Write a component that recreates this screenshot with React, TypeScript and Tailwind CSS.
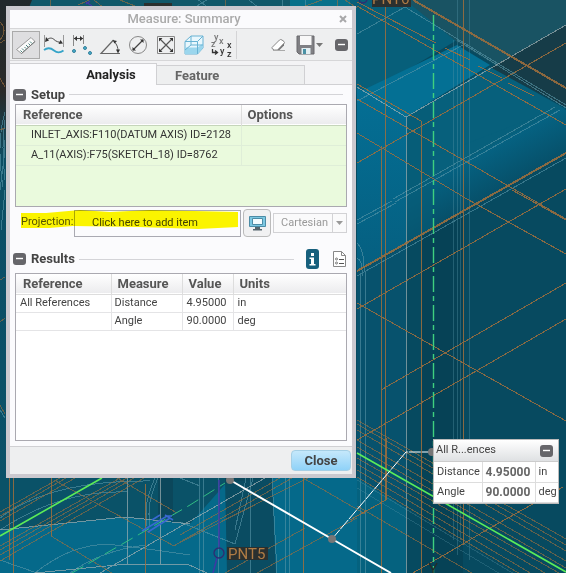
import React from 'react';

const REFERENCES = ['INLET_AXIS:F110(DATUM AXIS) ID=2128', 'A_11(AXIS):F75(SKETCH_18) ID=8762'];

const RESULTS = [
  { reference: 'All References', measure: 'Distance', value: '4.95000', units: 'in' },
  { reference: '', measure: 'Angle', value: '90.0000', units: 'deg' },
];

const MinusIcon: React.FC = () => (
  <svg width="13" height="12" viewBox="0 0 13 12" aria-hidden="true">
    <rect width="13" height="12" rx="3" fill="#66666a" />
    <path d="M3 5.5h7" stroke="#fff" strokeWidth="1.4" />
  </svg>
);

const RulerIcon: React.FC = () => (
  <svg width="22" height="22" viewBox="0 0 22 22" fill="none">
    <path d="M1.500 15.500 16 3.500l4 4L6.500 19.500z" fill="#fbfbfb" stroke="#999" />
    <path d="M6.500 19.500 20 7.500" stroke="#777" />
    <path d="m7 18-1.500-1.500M9 16.500l-2-2M11 14.500 9.500 13M13 13l-2-2M15 11l-1.500-1.500M17 9.500l-2-2" stroke="#4a8580" />
  </svg>
);

const LengthIcon: React.FC = () => (
  <svg width="22" height="22" viewBox="0 0 22 22" fill="none">
    <path d="M1.500 1v12M20.500 1v12" stroke="#999" />
    <path d="M3 6.500c3-3 6-3 8-1s5 3 8 3" stroke="#444" />
    <path d="m2 8 1-5 3 3.500zM20 9.500l-4.500.5 2-4z" fill="#333" />
    <path d="M1 16c4-3 7-2 10 .5s6 2.500 9.500 0" stroke="#35a4c8" strokeWidth="1.800" />
  </svg>
);

const DistanceIcon: React.FC = () => (
  <svg width="22" height="22" viewBox="0 0 22 22" fill="none">
    <path d="M2.500 1v11M12.500 1v9" stroke="#888" />
    <path d="M3 4.500h9" stroke="#444" />
    <path d="m3 4.500 3-2.500v5zM12 4.500l-3-2.500v5z" fill="#333" />
    <g fill="#46b1d2" stroke="#37809a">
      <circle cx="3" cy="17" r="1.500" /><circle cx="14" cy="14" r="1.500" /><circle cx="19" cy="19" r="1.500" />
    </g>
  </svg>
);

const AngleIcon: React.FC = () => (
  <svg width="22" height="22" viewBox="0 0 22 22" fill="none">
    <path d="M14.500 6 2 19.500h19" stroke="#666" strokeWidth="1.200" />
    <path d="M15.500 8c2.500 2.500 3.500 5.500 3.500 9" stroke="#555" />
    <path d="m13.500 6 4.500 1-2.500 2.500zM19 19.500l-2-4h4z" fill="#333" />
  </svg>
);

const DiameterIcon: React.FC = () => (
  <svg width="22" height="22" viewBox="0 0 22 22" fill="none">
    <circle cx="11" cy="11" r="8.500" stroke="#888" />
    <path d="m6 16 10-10" stroke="#444" strokeWidth="1.200" />
    <path d="M5.500 16.500V13L9 16.500zM16.500 5.500V9L13 5.500z" fill="#333" />
  </svg>
);

const AreaIcon: React.FC = () => (
  <svg width="22" height="22" viewBox="0 0 22 22" fill="none">
    <path d="M2.500 2.500h17v17h-17z" stroke="#888" />
    <path d="m5 5 12 12M17 5 5 17" stroke="#555" strokeWidth="1.200" />
    <path d="M4 4h3.500L4 7.500zM18 4h-3.500L18 7.500zM4 18h3.500L4 14.500zM18 18h-3.500l3.500-3.500z" fill="#333" />
  </svg>
);

const VolumeIcon: React.FC = () => (
  <svg width="22" height="22" viewBox="0 0 22 22" fill="none">
    <path d="M2 7.500 8 2h12v12l-5.500 6H2z" fill="#e8f7fd" stroke="#68b2d3" />
    <path d="M2 13.500h12.500l5.500-4V14l-5.500 6H2z" fill="#9bd6ed" />
    <path d="M2 7.500h12.500V20M14.500 7.500 20 2M8 2v9h12M8 11l-6 5" stroke="#68b2d3" />
  </svg>
);

const TransformIcon: React.FC = () => (
  <svg width="26" height="26" viewBox="0 0 26 26" fontFamily="Roboto, sans-serif" fontSize="9" fontWeight="500" fill="#777">
    <text x="5" y="8">y</text>
    <text x="2" y="15">z</text>
    <text x="10" y="12">x</text>
    <text x="18" y="16" fill="#333">x</text>
    <text x="11" y="22" fill="#333">y</text>
    <text x="18" y="25" fill="#333">z</text>
    <path d="M3.500 17v3.500h4M6 18.500l2.500 2-2.500 2" fill="none" stroke="#333" strokeWidth="1.300" />
  </svg>
);

const EraserIcon: React.FC = () => (
  <svg width="18" height="16" viewBox="0 0 18 16" fill="none">
    <path d="M2 10.500 9.500 3q1-1 2.500 0l2 1.500q1 1 0 2L7.500 13H4.500L2 11.500z" fill="#fff" stroke="#888" />
    <path d="m7.500 13 6.500-7V8.500l-5 5z" fill="#777" />
    <path d="M3 13.500h12" stroke="#aaa" />
  </svg>
);

const SaveIcon: React.FC = () => (
  <svg width="27" height="20" viewBox="0 0 27 20">
    <path d="M1 1h17v18H3l-2-2z" fill="#808084" stroke="#69696d" />
    <path d="M4 1h11.500v9H4z" fill="#f8f8f8" />
    <path d="M5.500 13h9v6h-9z" fill="#e3eff2" />
    <path d="M7 14h3v5H7z" fill="#4a91a5" />
    <path d="M20 8h7l-3.500 4z" fill="#777" />
  </svg>
);

const MonitorIcon: React.FC = () => (
  <svg className="shrink-0" width="17" height="16" viewBox="0 0 17 16">
    <path d="M.5 1.500h16v10H.5z" fill="#7cc8e2" stroke="#4d8ca6" />
    <path d="M3.500 3.500h10v6h-10z" fill="#f4fcff" stroke="#4d8ca6" />
    <path d="M6 12h5v2h2v1.500H4V14h2z" fill="#56666e" />
  </svg>
);

const InfoIcon: React.FC = () => (
  <svg width="13" height="20" viewBox="0 0 13 20">
    <rect width="13" height="20" rx="3" fill="#17607d" />
    <path d="M5 4h3v3H5zM3.500 8.500H8V15h1.500v1.500h-6V15H5v-5H3.500z" fill="#fff" />
  </svg>
);

const ReportIcon: React.FC = () => (
  <svg width="13" height="16" viewBox="0 0 13 16" fill="none">
    <path d="M.5.500h8l4 4v11H.5z" fill="#fff" stroke="#888" />
    <path d="M8.500.500v4h4" stroke="#888" />
    <circle cx="3.500" cy="8" r="1" stroke="#777" /><circle cx="3.500" cy="12" r="1" stroke="#777" />
    <path d="M6 8.500h5M6 12.500h5" stroke="#555" />
  </svg>
);

const TOOLS = [
  { label: 'Summary', icon: <RulerIcon /> },
  { label: 'Length', icon: <LengthIcon /> },
  { label: 'Distance', icon: <DistanceIcon /> },
  { label: 'Angle', icon: <AngleIcon /> },
  { label: 'Diameter', icon: <DiameterIcon /> },
  { label: 'Area', icon: <AreaIcon /> },
  { label: 'Volume', icon: <VolumeIcon /> },
  { label: 'Transform', icon: <TransformIcon /> },
];

// Wireframe of the part behind the dialog
const ModelScene: React.FC = () => (
  <svg className="absolute inset-0 h-full w-full" viewBox="0 0 566 573" preserveAspectRatio="xMinYMin slice" fill="none">
    <defs>
      <linearGradient id="band" gradientUnits="userSpaceOnUse" x1="420" y1="170" x2="455" y2="235">
        <stop offset="0" stopColor="#05688a" />
        <stop offset="1" stopColor="#07485f" />
      </linearGradient>
      <linearGradient id="left" x1="0" y1="0" x2="0" y2="1">
        <stop offset="0" stopColor="#22292c" />
        <stop offset=".16" stopColor="#2a2a28" />
        <stop offset=".28" stopColor="#0c4e64" />
        <stop offset="1" stopColor="#0a526a" />
      </linearGradient>
      <linearGradient id="column" x1="0" y1="0" x2="0" y2="1">
        <stop offset="0" stopColor="#046f95" />
        <stop offset="1" stopColor="#055f80" />
      </linearGradient>
    </defs>
    <rect width="566" height="573" fill="#074a60" />
    <rect width="60" height="573" fill="url(#left)" />
    <path d="M32 0h390v10H28z" fill="#11586a" />
    <path d="M290 0h70v10h-70z" fill="#08708a" />

    <path d="M350 0h63l44 40-100 60z" fill="#075f7a" />
    <path d="M405 0h161v108L457 42z" fill="#195363" />
    <path d="m490 68 76-43v82z" fill="#163c48" />
    <path d="m357 93 100-48 33 20-84 52z" fill="#047094" />
    <path d="m406 117 84-50 76 42-160 86z" fill="#07607c" />
    <path d="m406 194 155-87-155 60z" fill="#07607c" />
    <path d="m357 220 204-112 5 2v44L357 272z" fill="url(#band)" />
    <path d="M357 88 406 117v127l-49 27z" fill="url(#column)" />
    <path d="M406 117l26-14v127l-26 14z" fill="#075b76" opacity=".6" />
    <path d="m357 272 49-27v328h-49z" fill="#07526d" />
    <path d="m406 245 15-8v336h-15z" fill="#064a60" />
    <path d="m421 237 42-25v361h-42z" fill="#064256" />

    <path d="M0 478h357v95H0z" fill="#0a5268" />
    <path d="m0 530 125-13 65 7 37-42 48-4h85v95H0z" fill="#05698a" />
    <path d="M158 478h15v40h-15zM225 478h47l4 95h-49z" fill="#0b4558" opacity=".8" />
    <path d="m357 478 49 30v65h-49z" fill="#05627f" />

    <g stroke="#5996a8" opacity=".6" shapeRendering="crispEdges">
      <path d="m357 34 48-27 161 98M457 40l109 68M357 101 463 45M393 199l162-92M395 202l165-92M357 220l35-19M357 224l39-21" />
      <path d="m357 276 209-118M357 243q8 8 7 30M357 258q6 3 5 18M360 275v298M365 272v301" />
      <path d="M0 518q50-38 150-37M0 530q60-40 127-38M35 573q40-32 80-28 35 4 75 10M70 573q30-22 75-28" />
      <path d="M199 478v95M203 478v95M218 478v95M250 478v95M272 478l5 95M285 478v95M289 478v95" />
      <path d="M155 478q-12 25-8 48M158 478q-12 25-8 48M180 478l20 8M0 560l37 13M180 522l55 22 18-66M235 530l11-52" />
      <path d="M0 190 5 150 3 130M5 112q-9 30-2 75M5 120q-4 25 0 60M1 230 5 190M0 410l5 8M170 0l26-2 10 8M190 10l17-10M282 0v8M305 0v8M249 0l10 8" />
      <path d="M457 0v555M453 40v500M460 50v490M469 0v560" opacity=".6" />
      <path d="m357 480 209 125M357 488l150 90" opacity=".5" />
    </g>
    <path
      d="m357 87 49 30L566 25M406 117v456M0 530l125-13 65 7M100 573l90-52 75-43M127 478v86M160 478v86M35 573l92-9h60l20 9"
      stroke="#9fafb2"
      opacity=".7"
      shapeRendering="crispEdges"
    />

    <g stroke="#a06f3d" opacity=".85" shapeRendering="crispEdges">
      <path d="M385 0v500M381 146v427M421 121v452M463 0v545M9 478v82M13 478v95M51 478v58M145 484v89M303 478v95" />
      <path d="m413 0 153 88" strokeWidth="2" />
      <path d="m357 271 209-118" strokeWidth="2" />
      <path d="m357 6 209 119M357 84l64 37M357 99l209 120M357 133l110 66 99 55M357 303l209 118M512 190l54 30" />
      <path d="m357 163 209-120M357 309l209-120M381 390l185-107M445 389l121-70M357 440l88-51" />
      <path d="m357 2 79 41M445 48l25 12M478 66l24 12M508 83l26 13" />
      <path d="m406 577 57-33 20-12 80-45M350 520l36-20v-62M357 573l30 18" />
    </g>
    <g stroke="#a06f3d" opacity=".6" shapeRendering="crispEdges">
      <path d="M357 420l209 119M357 424l209 121M357 430l209 121M357 440l209 121M357 447l209 121M357 458l209 119M357 464l195 113M357 470l180 107M357 477l165 98M357 506l120 70" />
      <path d="m0 512 60-34M0 516l66-38M0 521l75-43M0 546l120-68M0 550l127-72M0 555l134-77M0 561l144-83M51 536l61 37M54 480l120 66 34-20M117 478l60 35M173 546l135-68M180 535l100-57M180 542l112-64M257 573l100-55M303 478l62 36M225 573l80-45" />
      <path d="M0 22q8 8 0 18M0 43l5-3M0 78l5 9M0 130l5-2M0 280l5-3M0 322l5-4M0 405l5 9M50 0v7M78 5l18-8M94 0l10 8M120 0l20 8M225 0v8M337 0v8M345 0l12 8M300 8l22-8" />
    </g>

    <path d="M0 536 102 478M357 453l209 119" stroke="#5cec58" strokeWidth="1.600" />
    <path d="M433.500 15v558" stroke="#3fd07f" strokeWidth="1.400" strokeDasharray="16 4 5 4" />
    <path d="m72 573 118-68 35-22" stroke="#31bd83" strokeDasharray="13 6" />
    <path d="m142 531 25-15h5M148 532l22-14M152 520l8-5M165 515l8 5" stroke="#3969d2" strokeWidth="1.500" />
    <path d="M219 480v67M217 558l-4 15M86 4l4-3M86 2l6 4" stroke="#4038a5" strokeWidth="1.500" />
    <circle cx="219" cy="553" r="5" stroke="#302b72" strokeWidth="1.300" />
    <circle cx="363" cy="-1" r="4" stroke="#302b72" strokeWidth="1.300" />
    <path d="M227 547h41v13h-41zM372 0h39v7h-39zM144 3h28v4h-28z" fill="#2b302f" />
    <g fontFamily="Roboto, sans-serif" fontSize="15" fill="#b07c45">
      <text x="228" y="559">PNT5</text>
      <text x="372" y="4">PNT6</text>
    </g>
    <path d="m230 480 102 59 59 34" stroke="#fff" strokeWidth="2" />
    <path d="m332 539 74-87h27" stroke="#fff" strokeDasharray="12 1" />
    <g fill="#777">
      <circle cx="230" cy="480" r="4" /><circle cx="332" cy="539" r="4" /><circle cx="432" cy="452" r="4" />
    </g>
    <path d="m429 563 4 7 4-7M433 570v3" stroke="#242d2a" strokeWidth="1.500" />
  </svg>
);

const SectionTitle: React.FC<{ title: string; children?: React.ReactNode }> = ({ title, children }) => (
  <div className="flex items-center pl-[3px]">
    <button aria-label={`Collapse ${title}`}><MinusIcon /></button>
    <h2 className="ml-[5px] text-[13px] font-bold leading-4 text-[#444]">{title}</h2>
    <div className="mx-1 h-px flex-1 bg-[#d4d4d8]" />
    {children}
  </div>
);

const MeasureDialog: React.FC = () => (
  <section className="relative w-[350px] border-4 border-[#cbc9cf] bg-[#fbfbfd] text-[11px] text-[#444]">
    <header className="flex h-[19px] items-center border-b border-[#d6d6d8] px-1">
      <h1 className="flex-1 pl-4 text-center text-[13px] font-medium leading-4 text-[#aaa]">Measure: Summary</h1>
      <button aria-label="Close window">
        <svg width="10" height="8" viewBox="0 0 10 8"><path d="m2 1 6 6M8 1 2 7" stroke="#a8a8aa" strokeWidth="2" /></svg>
      </button>
    </header>

    <div className="flex h-8 items-center border-b border-[#d6d6d8] bg-[#eeeff0] pl-[2px] pr-1">
      {TOOLS.map((tool, index) => (
        <button
          key={tool.label}
          aria-label={tool.label}
          className={index === 0 ? 'flex h-7 w-7 items-center justify-center border border-[#aaa] bg-[#dedee0]' : 'flex h-7 w-7 items-center justify-center'}
        >
          {tool.icon}
        </button>
      ))}
      <div className="h-7 w-px bg-[#d4d4d6]" />
      <div className="flex flex-1 items-center justify-end">
        <button aria-label="Clear" className="mr-2"><EraserIcon /></button>
        <button aria-label="Save" className="mr-3"><SaveIcon /></button>
        <button aria-label="Collapse toolbar"><MinusIcon /></button>
      </div>
    </div>

    <div className="flex h-6 items-end bg-[#f3f3f5] text-[13px] font-bold leading-5">
      <button className="h-[22px] w-[147px] border-r border-t border-[#d0d0d3] bg-[#fbfbfd] pl-14 text-center text-[#222]">Analysis</button>
      <button className="h-5 w-[148px] border-b border-r border-t border-[#d0d0d3] bg-[#eeeff0] pl-[18px] text-left text-[#666]">Feature</button>
      <div className="h-full flex-1 border-b border-[#d0d0d3]" />
    </div>

    <div className="px-[5px] pb-[5px]">
      <div className="-ml-[5px] flex h-[19px] items-center [&>div]:w-full"><SectionTitle title="Setup" /></div>
      <div className="h-[103px] border border-[#aaa9b0] bg-[#eafadd]">
        <table className="w-full table-fixed border-collapse text-left">
          <thead>
            <tr className="h-5 border-b border-[#c5d5ba] bg-linear-to-b from-white to-[#ececee] text-[13px] leading-4 text-[#555]">
              <th className="w-[225px] border-r border-[#ddd] pl-[7px]">Reference</th>
              <th className="pl-[6px]">Options</th>
            </tr>
          </thead>
          <tbody>
            {REFERENCES.map((reference) => (
              <tr key={reference} className="h-5 border-b border-[#dfeed8] leading-4 text-[#333]">
                <td className="whitespace-nowrap border-r border-[#dfeed8] pl-[15px]">{reference}</td>
                <td />
              </tr>
            ))}
          </tbody>
        </table>
      </div>

      <div className="relative mt-[2px] flex h-7 items-center">
        {/* marker stroke over the label and the field */}
        <svg className="pointer-events-none absolute left-[5px] top-0 z-10 h-5 w-[220px] mix-blend-multiply" viewBox="0 0 220 20" preserveAspectRatio="none">
          <path d="M1 4 26 4 60 1 90 3 130 1 218 3v15l-40 2-60-2-65-1-24 2H1z" fill="#fff800" />
        </svg>
        <label htmlFor="projection" className="w-[59px] pb-px pl-[6px] text-[#555]">Projection:</label>
        <input id="projection" className="h-[27px] min-w-0 flex-1 border border-[#aaaab2] bg-[#fbfbfd] pb-px pl-[17px] text-[#444]" defaultValue="Click here to add item" />
        <button aria-label="Use view plane" className="ml-[2px] flex h-7 w-7 items-center justify-center rounded border border-[#bbb] bg-[#f1f1f2]"><MonitorIcon /></button>
        <div className="relative ml-[2px]">
          <select aria-label="Coordinate type" className="block h-5 w-[74px] appearance-none border border-[#d2d2d5] bg-[#fafafb] pl-[7px] text-[#999]">
            <option>Cartesian</option>
          </select>
          <svg className="pointer-events-none absolute right-0 top-0" width="15" height="20" viewBox="0 0 15 20">
            <path d="M.5 1v18" stroke="#d2d2d5" /><path d="M4 8h7l-3.500 4z" fill="#999" />
          </svg>
        </div>
      </div>

      <div className="-ml-[5px] mt-2 flex h-7 items-center [&>div]:w-full">
        <SectionTitle title="Results">
          <button aria-label="Information" className="ml-2 mr-[14px]"><InfoIcon /></button>
          <button aria-label="Report" className="mr-px"><ReportIcon /></button>
        </SectionTitle>
      </div>
      <div className="h-[168px] border border-[#aaa9b0] bg-white">
        <table className="w-full table-fixed border-collapse text-left">
          <thead>
            <tr className="h-5 border-b border-[#ddd] bg-linear-to-b from-white to-[#ececee] text-[13px] leading-4 text-[#555]">
              <th className="w-[95px] border-r border-[#ddd] pl-[7px]">Reference</th>
              <th className="w-[71px] border-r border-[#ddd] pl-[6px]">Measure</th>
              <th className="w-[51px] border-r border-[#ddd] pl-[6px]">Value</th>
              <th className="pl-[6px]">Units</th>
            </tr>
          </thead>
          <tbody>
            {RESULTS.map((row) => (
              <tr key={row.measure} className="h-[18px] border-b border-[#e4e4e6] leading-4">
                <td className="border-r border-[#e4e4e6] pl-1">{row.reference}</td>
                <td className="border-r border-[#e4e4e6] pl-[3px]">{row.measure}</td>
                <td className="border-r border-[#e4e4e6] pl-1">{row.value}</td>
                <td className="pl-1">{row.units}</td>
              </tr>
            ))}
          </tbody>
        </table>
      </div>
    </div>

    <footer className="flex h-7 items-center justify-end border-t border-[#d0d0d3] bg-[#eeeff0] pr-px">
      <button className="h-[21px] w-[60px] rounded-sm border border-[#a5cfe5] bg-linear-to-b from-[#c5e8fb] to-[#8fd2f8] text-[13px] font-bold leading-4 text-[#444]">Close</button>
    </footer>
  </section>
);

// Floating annotation pinned to the measured entity
const ResultTag: React.FC = () => (
  <aside className="absolute left-[433px] top-[439px] w-[126px] border border-[#bbb] bg-white text-[11px] text-[#444]">
    <div className="flex h-[22px] items-center justify-between border-b border-[#ccc] bg-linear-to-b from-white to-[#dfe1e3] pl-[2px] pr-[5px]">
      <span>All R...ences</span>
      <button aria-label="Collapse result"><MinusIcon /></button>
    </div>
    <table className="w-full table-fixed border-collapse">
      <tbody>
        {RESULTS.map((row) => (
          <tr key={row.measure} className="h-5 border-b border-[#ddd] leading-4">
            <td className="w-12 border-r border-[#ddd] pl-[3px]">{row.measure}</td>
            <td className="w-[53px] border-r border-[#ddd] pl-[3px] text-xs font-bold text-[#666]">{row.value}</td>
            <td className="pl-[3px]">{row.units}</td>
          </tr>
        ))}
      </tbody>
    </table>
  </aside>
);

const App: React.FC = () => (
  <main className="relative min-h-screen overflow-hidden bg-[#074a60] p-[6px] font-['Roboto',sans-serif]">
    <ModelScene />
    <MeasureDialog />
    <ResultTag />
  </main>
);

export default App;
